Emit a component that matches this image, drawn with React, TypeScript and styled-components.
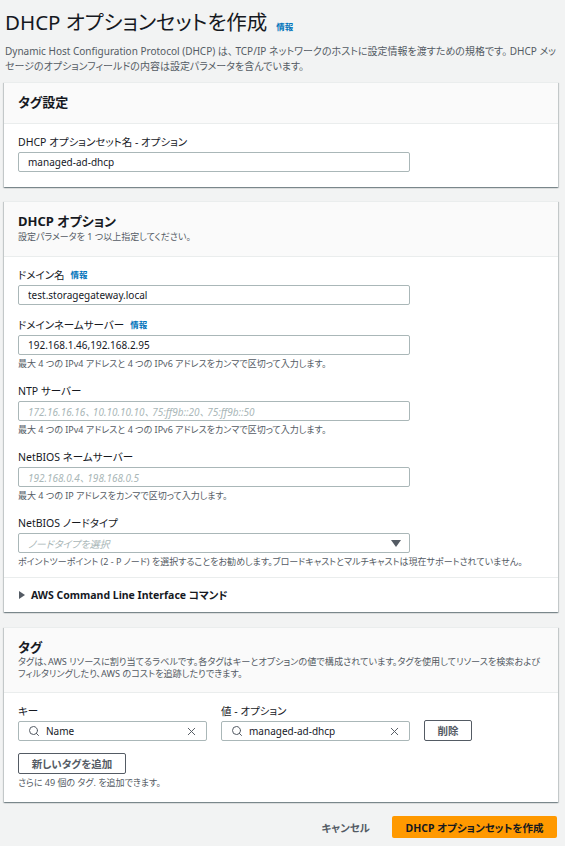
import React from 'react';
import styled, { createGlobalStyle } from 'styled-components';
import { Search, X } from 'lucide-react';

const GlobalStyle = createGlobalStyle`
  body {
    margin: 0;
    background: #f2f3f3;
    font-family: "Noto Sans", "Noto Sans CJK JP", sans-serif;
    font-feature-settings: "palt";
    color: #16191f;
  }
  * { box-sizing: border-box; }
`;

const Page = styled.div`
  padding: 8px 7px 8px 4px;
  display: flex;
  flex-direction: column;
`;

const TitleRow = styled.div`
  display: flex;
  align-items: baseline;
  gap: 9px;
  padding-left: 1px;
`;

const Title = styled.h1`
  margin: 0;
  font-size: 20.5px;
  line-height: 28px;
  font-weight: 400;
`;

const InfoLink = styled.a`
  color: #0073bb;
  font-size: 8.5px;
  font-weight: 700;
  text-decoration: none;
`;

const Intro = styled.p`
  margin: 8px 0 0 1px;
  font-size: 10px;
  line-height: 15px;
  color: #545b64;
`;

const Panel = styled.section<{ $gap?: number }>`
  margin-top: ${p => p.$gap ?? 14}px;
  background: #fff;
  border-top: 1px solid #eaeded;
  box-shadow: 0 1px 1px 0 rgba(0, 28, 36, 0.3), 1px 1px 1px 0 rgba(0, 28, 36, 0.15),
    -1px 1px 1px 0 rgba(0, 28, 36, 0.15);
`;

const PanelHeader = styled.div`
  background: #fafafa;
  border-bottom: 1px solid #eaeded;
  padding: 10px 14px 12px;
`;

const PanelTitle = styled.h2`
  margin: 0;
  font-size: 13px;
  line-height: 18px;
  font-weight: 700;
`;

const PanelDesc = styled.p<{ $lh?: number; $size?: number }>`
  margin: 0;
  font-size: ${p => p.$size ?? 9}px;
  line-height: ${p => p.$lh ?? 14}px;
  color: #545b64;
`;

const PanelBody = styled.div<{ $bottom?: number }>`
  padding: 10px 14px ${p => p.$bottom ?? 15}px;
  display: flex;
  flex-direction: column;
  gap: 12px;
`;

const Field = styled.div`
  display: flex;
  flex-direction: column;
`;

const Label = styled.label`
  display: flex;
  align-items: center;
  gap: 6px;
  font-size: 10.5px;
  line-height: 16px;
  margin-bottom: 2px;
`;

const Input = styled.div<{ $width?: number; $placeholder?: boolean }>`
  width: ${p => p.$width ?? 392}px;
  height: 20px;
  border: 1px solid #aab7b8;
  border-radius: 2px;
  background: #fff;
  display: flex;
  align-items: center;
  padding: 0 8px 0 9px;
  font-size: 10px;
  color: ${p => (p.$placeholder ? '#aab7b8' : '#16191f')};
  font-style: ${p => (p.$placeholder ? 'italic' : 'normal')};
  gap: 6px;
`;

const InputText = styled.span`
  flex: 1;
  white-space: nowrap;
  overflow: hidden;
`;

const Hint = styled.div`
  margin-top: 2px;
  font-size: 9px;
  line-height: 14px;
  color: #545b64;
`;

const Expander = styled.div`
  border-top: 1px solid #eaeded;
  padding: 10px 14px 10px 15px;
  display: flex;
  align-items: center;
  gap: 6px;
  font-size: 10.5px;
  line-height: 14px;
  font-weight: 700;
`;

const TagRow = styled.div`
  display: flex;
  align-items: flex-end;
  gap: 14px;
`;

const Button = styled.button<{ $width: number }>`
  width: ${p => p.$width}px;
  height: 21px;
  border: 1px solid #545b64;
  border-radius: 2px;
  background: #fff;
  color: #545b64;
  font-family: inherit;
  font-feature-settings: "palt";
  font-size: 10.5px;
  font-weight: 700;
  padding: 0;
`;

const Footer = styled.div`
  margin-top: 14px;
  display: flex;
  justify-content: flex-end;
  align-items: center;
  gap: 22px;
  padding-right: 1px;
`;

const LinkButton = styled.span`
  font-size: 10.5px;
  font-weight: 700;
  color: #545b64;
`;

const PrimaryButton = styled.button`
  width: 165px;
  height: 22px;
  border: none;
  border-radius: 2px;
  background: #ff9900;
  color: #16191f;
  font-family: inherit;
  font-feature-settings: "palt";
  font-size: 10.5px;
  font-weight: 700;
  padding: 0;
`;

const Caret = ({ dir }: { dir: 'down' | 'right' }) =>
  dir === 'down' ? (
    <svg width="10" height="7" viewBox="0 0 10 7">
      <polygon points="0,0 10,0 5,7" fill="#545b64" />
    </svg>
  ) : (
    <svg width="6" height="8" viewBox="0 0 6 8">
      <polygon points="0,0 6,4 0,8" fill="#545b64" />
    </svg>
  );

type FieldDef = {
  label: string;
  info?: boolean;
  value: string;
  placeholder?: boolean;
  hint?: string;
};

const dhcpFields: FieldDef[] = [
  { label: 'ドメイン名', info: true, value: 'test.storagegateway.local' },
  {
    label: 'ドメインネームサーバー',
    info: true,
    value: '192.168.1.46,192.168.2.95',
    hint: '最大 4 つの IPv4 アドレスと 4 つの IPv6 アドレスをカンマで区切って入力します。',
  },
  {
    label: 'NTP サーバー',
    value: '172.16.16.16、 10.10.10.10、 75:ff9b::20、 75:ff9b::50',
    placeholder: true,
    hint: '最大 4 つの IPv4 アドレスと 4 つの IPv6 アドレスをカンマで区切って入力します。',
  },
  {
    label: 'NetBIOS ネームサーバー',
    value: '192.168.0.4、 198.168.0.5',
    placeholder: true,
    hint: '最大 4 つの IP アドレスをカンマで区切って入力します。',
  },
];

const App = () => {
  return (
    <>
      <GlobalStyle />
      <Page>
        <TitleRow>
          <Title>DHCP オプションセットを作成</Title>
          <InfoLink>情報</InfoLink>
        </TitleRow>
        <Intro>
          Dynamic Host Configuration Protocol (DHCP) は、 TCP/IP ネットワークのホストに設定情報を渡すための規格です。 DHCP
          メッセージのオプションフィールドの内容は設定パラメータを含んでいます。
        </Intro>

        <Panel $gap={8}>
          <PanelHeader>
            <PanelTitle>タグ設定</PanelTitle>
          </PanelHeader>
          <PanelBody>
            <Field>
              <Label>DHCP オプションセット名 - オプション</Label>
              <Input>
                <InputText>managed-ad-dhcp</InputText>
              </Input>
            </Field>
          </PanelBody>
        </Panel>

        <Panel>
          <PanelHeader>
            <PanelTitle>DHCP オプション</PanelTitle>
            <PanelDesc>設定パラメータを 1 つ以上指定してください。</PanelDesc>
          </PanelHeader>
          <PanelBody $bottom={8}>
            {dhcpFields.map(f => (
              <Field key={f.label}>
                <Label>
                  {f.label}
                  {f.info && <InfoLink>情報</InfoLink>}
                </Label>
                <Input $placeholder={f.placeholder}>
                  <InputText>{f.value}</InputText>
                </Input>
                {f.hint && <Hint>{f.hint}</Hint>}
              </Field>
            ))}
            <Field>
              <Label>NetBIOS ノードタイプ</Label>
              <Input $placeholder>
                <InputText>ノードタイプを選択</InputText>
                <Caret dir="down" />
              </Input>
              <Hint>
                ポイントツーポイント (2 - P ノード) を選択することをお勧めします。ブロードキャストとマルチキャストは現在サポートされていません。
              </Hint>
            </Field>
          </PanelBody>
          <Expander>
            <Caret dir="right" />
            AWS Command Line Interface コマンド
          </Expander>
        </Panel>

        <Panel $gap={15}>
          <PanelHeader>
            <PanelTitle>タグ</PanelTitle>
            <PanelDesc $lh={12} $size={9.15}>
              タグは、AWS リソースに割り当てるラベルです。各タグはキーとオプションの値で構成されています。タグを使用してリソースを検索およびフィルタリングしたり、AWS のコストを追跡したりできます。
            </PanelDesc>
          </PanelHeader>
          <PanelBody $bottom={12}>
            <TagRow>
              <Field>
                <Label>キー</Label>
                <Input $width={189}>
                  <Search size={12} color="#545b64" strokeWidth={2} />
                  <InputText>Name</InputText>
                  <X size={13} color="#545b64" strokeWidth={1.8} />
                </Input>
              </Field>
              <Field>
                <Label>値 - オプション</Label>
                <Input $width={189}>
                  <Search size={12} color="#545b64" strokeWidth={2} />
                  <InputText>managed-ad-dhcp</InputText>
                  <X size={13} color="#545b64" strokeWidth={1.8} />
                </Input>
              </Field>
              <Button $width={48}>削除</Button>
            </TagRow>
            <Field>
              <Button $width={108}>新しいタグを追加</Button>
              <Hint>さらに 49 個の タグ. を追加できます。</Hint>
            </Field>
          </PanelBody>
        </Panel>

        <Footer>
          <LinkButton>キャンセル</LinkButton>
          <PrimaryButton>DHCP オプションセットを作成</PrimaryButton>
        </Footer>
      </Page>
    </>
  );
};

export default App;
